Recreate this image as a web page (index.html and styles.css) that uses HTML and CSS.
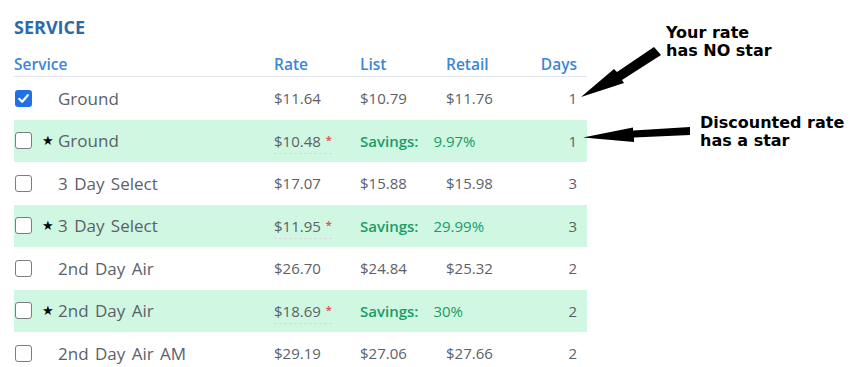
FILE: index.html
```html
<!DOCTYPE html>
<html>
<head>
<meta charset="utf-8">
<link rel="stylesheet" href="styles.css">
</head>
<body>
<div class="page">
  <div class="panel">
    <h2 class="title">SERVICE</h2>
    <div class="table">
      <div class="row head">
        <div class="c-name-h">Service</div>
        <div class="c-rate">Rate</div>
        <div class="c-list">List</div>
        <div class="c-retail">Retail</div>
        <div class="c-days">Days</div>
      </div>

      <div class="row">
        <div class="c-check"><span class="cb checked"><svg viewBox="0 0 17 17" width="17" height="17"><path d="M4.2 8.8 L7.2 11.8 L12.8 5.2" fill="none" stroke="#fff" stroke-width="2.2" stroke-linecap="round" stroke-linejoin="round"/></svg></span></div>
        <div class="c-star"></div>
        <div class="c-name">Ground</div>
        <div class="c-rate">$11.64</div>
        <div class="c-list">$10.79</div>
        <div class="c-retail">$11.76</div>
        <div class="c-days">1</div>
      </div>

      <div class="row disc">
        <div class="c-check"><span class="cb"></span></div>
        <div class="c-star">★</div>
        <div class="c-name">Ground</div>
        <div class="c-rate"><span class="drate">$10.48<sup class="ast">*</sup></span></div>
        <div class="c-sav"><span class="sav-l">Savings:</span><span class="sav-v">9.97%</span></div>
        <div class="c-days">1</div>
      </div>

      <div class="row">
        <div class="c-check"><span class="cb"></span></div>
        <div class="c-star"></div>
        <div class="c-name">3 Day Select</div>
        <div class="c-rate">$17.07</div>
        <div class="c-list">$15.88</div>
        <div class="c-retail">$15.98</div>
        <div class="c-days">3</div>
      </div>

      <div class="row disc">
        <div class="c-check"><span class="cb"></span></div>
        <div class="c-star">★</div>
        <div class="c-name">3 Day Select</div>
        <div class="c-rate"><span class="drate">$11.95<sup class="ast">*</sup></span></div>
        <div class="c-sav"><span class="sav-l">Savings:</span><span class="sav-v">29.99%</span></div>
        <div class="c-days">3</div>
      </div>

      <div class="row">
        <div class="c-check"><span class="cb"></span></div>
        <div class="c-star"></div>
        <div class="c-name">2nd Day Air</div>
        <div class="c-rate">$26.70</div>
        <div class="c-list">$24.84</div>
        <div class="c-retail">$25.32</div>
        <div class="c-days">2</div>
      </div>

      <div class="row disc">
        <div class="c-check"><span class="cb"></span></div>
        <div class="c-star">★</div>
        <div class="c-name">2nd Day Air</div>
        <div class="c-rate"><span class="drate">$18.69<sup class="ast">*</sup></span></div>
        <div class="c-sav"><span class="sav-l">Savings:</span><span class="sav-v">30%</span></div>
        <div class="c-days">2</div>
      </div>

      <div class="row">
        <div class="c-check"><span class="cb"></span></div>
        <div class="c-star"></div>
        <div class="c-name">2nd Day Air AM</div>
        <div class="c-rate">$29.19</div>
        <div class="c-list">$27.06</div>
        <div class="c-retail">$27.66</div>
        <div class="c-days">2</div>
      </div>
    </div>
  </div>

  <div class="note note-1">Your rate<br>has NO star</div>
  <div class="note note-2">Discounted rate<br>has a star</div>

  <svg class="arrows" width="856" height="367" viewBox="0 0 856 367">
    <polygon points="661,55 622,80 624,83 581,97 614,69 617,72 654,47" fill="#000"/>
    <polygon points="690,127 690,135 634,137.5 634,142 583,137.5 633,127.5 633,130.5" fill="#000"/>
  </svg>
</div>
</body>
</html>
```

FILE: styles.css
```css
html, body {
  margin: 0;
  padding: 0;
  background: #fff;
}

.page {
  position: relative;
  width: 856px;
  height: 367px;
  overflow: hidden;
  font-family: "Open Sans", "Noto Sans", sans-serif;
}

.panel {
  padding: 16px 0 0 14px;
}

.title {
  margin: 0;
  font-size: 18px;
  line-height: 22px;
  font-weight: 700;
  color: #2d6aa8;
}

.table {
  width: 573px;
  margin-top: 16px;
}

.row {
  display: grid;
  grid-template-columns: 26px 18px 216px 86px 86px 74px 67px;
  align-items: center;
  height: 42.5px;
  color: #5c6169;
  font-size: 15px;
}

.row.head {
  height: 20px;
  padding-bottom: 2px;
  border-bottom: 1px solid #e3e6ea;
  color: #3b87d6;
  font-weight: 600;
  font-size: 15.5px;
  line-height: 20px;
  align-items: end;
}

.c-name-h { grid-column: 1 / 4; }
.row.head .c-rate { grid-column: 4; }
.row.head .c-list { grid-column: 5; }
.row.head .c-retail { grid-column: 6; }
.row.head .c-days { grid-column: 7; }

.row.disc {
  background: #cff7e2;
}

.c-check {
  display: flex;
  align-items: center;
  padding-left: 1px;
}

.cb {
  display: block;
  width: 17px;
  height: 17px;
  box-sizing: border-box;
  border: 1.5px solid #7a7d82;
  border-radius: 3px;
  background: #fff;
}

.cb.checked {
  border: none;
  background: #1f72e6;
}

.cb svg { display: block; }

.c-star {
  font-size: 12.5px;
  color: #000;
  padding-left: 2px;
  line-height: 1;
}

.c-name {
  font-size: 17px;
  word-spacing: 2px;
}

.c-days {
  text-align: right;
  padding-right: 10px;
}

.drate {
  border-bottom: 1px dashed #d6dbe0;
  padding-bottom: 2px;
}

.ast {
  color: #e05a5a;
  font-size: 11px;
  font-weight: 700;
  vertical-align: 0;
  position: relative;
  top: -3px;
  margin-left: 5px;
}

.c-sav {
  grid-column: 5 / 7;
  display: flex;
  gap: 15px;
  color: #189c68;
}

.sav-l { font-weight: 600; }
.sav-v { font-weight: 500; }

.note {
  position: absolute;
  font-family: "DejaVu Sans", sans-serif;
  font-weight: 700;
  font-size: 16px;
  line-height: 18px;
  color: #000;
}

.note-1 { left: 666px; top: 24px; }
.note-2 { left: 700px; top: 114px; }

.arrows {
  position: absolute;
  left: 0;
  top: 0;
  pointer-events: none;
}
```
